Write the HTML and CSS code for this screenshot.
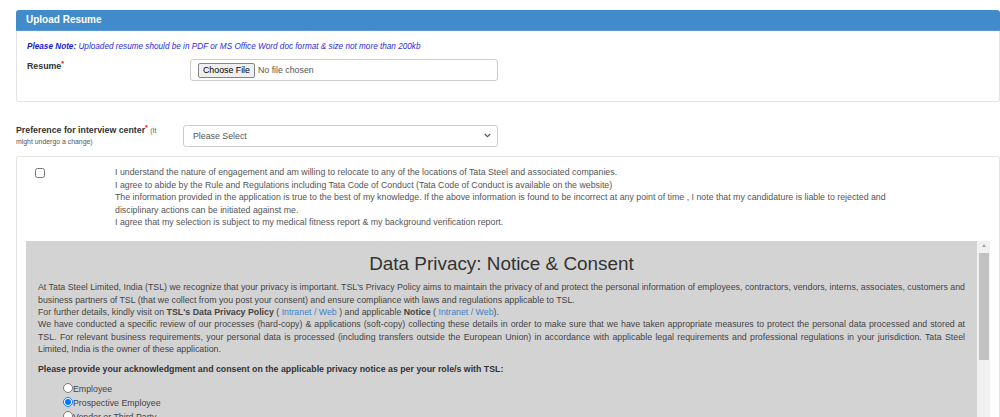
FILE: index.html
```html
<!DOCTYPE html>
<html lang="en">
<head>
<meta charset="utf-8">
<title>Upload Resume</title>
<link rel="stylesheet" href="styles.css">
</head>
<body>
<div class="page">
  <section class="panel panel-upload">
    <div class="panel-heading">Upload Resume</div>
    <div class="panel-body">
      <p class="note"><b>Please Note:</b> Uploaded resume should be in PDF or MS Office Word doc format &amp; size not more than 200kb</p>
      <div class="form-row">
        <label class="lbl lbl-resume">Resume<sup class="req">*</sup></label>
        <input type="file" class="file-input">
      </div>
    </div>
  </section>

  <div class="form-row pref-row">
    <label class="lbl lbl-pref">Preference for interview center<sup class="req">*</sup> <small>(It might undergo a change)</small></label>
    <div class="select-wrap">
      <select class="select"><option>Please Select</option></select>
      <svg class="select-arrow" width="7" height="5" viewBox="0 0 7 5" aria-hidden="true"><path d="M0.8 1 L3.5 3.7 L6.2 1" fill="none" stroke="#555" stroke-width="1.1"/></svg>
    </div>
  </div>

  <section class="panel panel-consent">
    <div class="consent-row">
      <div class="check-col"><input type="checkbox" class="check"></div>
      <div class="consent-text">I understand the nature of engagement and am willing to relocate to any of the locations of Tata Steel and associated companies.<br>I agree to abide by the Rule and Regulations including Tata Code of Conduct (Tata Code of Conduct is available on the website)<br>The information provided in the application is true to the best of my knowledge. If the above information is found to be incorrect at any point of time , I note that my candidature is liable to rejected and disciplinary actions can be initiated against me.<br>I agree that my selection is subject to my medical fitness report &amp; my background verification report.</div>
    </div>
    <div class="privacy-box">
      <div class="privacy-content">
        <h2 class="privacy-title">Data Privacy: Notice &amp; Consent</h2>
        <p class="privacy-text">At Tata Steel Limited, India (TSL) we recognize that your privacy is important. TSL's Privacy Policy aims to maintain the privacy of and protect the personal information of employees, contractors, vendors, interns, associates, customers and business partners of TSL (that we collect from you post your consent) and ensure compliance with laws and regulations applicable to TSL.<br>For further details, kindly visit on <b>TSL's Data Privacy Policy</b> ( <span class="link">Intranet / Web</span> ) and applicable <b>Notice</b> ( <span class="link">Intranet / Web</span>).<br>We have conducted a specific review of our processes (hard-copy) &amp; applications (soft-copy) collecting these details in order to make sure that we have taken appropriate measures to protect the personal data processed and stored at TSL. For relevant business requirements, your personal data is processed (including transfers outside the European Union) in accordance with applicable legal requirements and professional regulations in your jurisdiction. Tata Steel Limited, India is the owner of these application.</p>
        <p class="ask">Please provide your acknowledgment and consent on the applicable privacy notice as per your role/s with TSL:</p>
        <ul class="roles">
          <li><label><input type="radio" name="role" class="radio">Employee</label></li>
          <li><label><input type="radio" name="role" class="radio" checked>Prospective Employee</label></li>
          <li><label><input type="radio" name="role" class="radio">Vendor or Third Party</label></li>
        </ul>
      </div>
      <div class="scrollbar" aria-hidden="true">
        <div class="sb-up"></div>
        <div class="sb-thumb"></div>
      </div>
    </div>
  </section>
</div>
</body>
</html>
```
FILE: styles.css
```css
html, body {
  margin: 0;
  background: #fff;
}
body {
  font-family: "Liberation Sans", Arial, sans-serif;
  font-size: 8.8px;
  line-height: 12.4px;
  color: #333;
  overflow: hidden;
}
.page {
  padding: 10px 0 0 16px;
}
.panel {
  border: 1px solid #e3e3e3;
  border-radius: 3px;
  background: #fff;
}
.panel-upload {
  border-top: 0;
}
.panel-heading {
  margin: 0 -1px;
  padding: 5px 10px;
  background: #428bca;
  border-bottom: 1px solid #5a9ad3;
  border-radius: 3px 3px 0 0;
  color: #fff;
  font-size: 10px;
  font-weight: bold;
  line-height: 10px;
}
.panel-body {
  padding: 10px 10px 20px;
}
.note {
  margin: 0 0 5px;
  font-size: 8.2px;
  font-style: italic;
  color: #2b2be8;
}
.note b {
  color: #1a1ad0;
}
.form-row {
  display: flex;
  align-items: flex-start;
}
.lbl {
  font-weight: bold;
  color: #333;
}
.req {
  color: #e00;
  font-size: 7px;
  line-height: 0;
  vertical-align: 3px;
}
.lbl-resume {
  width: 163px;
  flex: none;
  padding-top: 1.5px;
}
.file-input {
  box-sizing: border-box;
  width: 308px;
  height: 22px;
  margin-top: 0.5px;
  padding: 3px 7px;
  border: 1px solid #ccc;
  border-radius: 3px;
  font-family: "Liberation Sans", Arial, sans-serif;
  font-size: 8.8px;
  color: #555;
  background: #fff;
}
.file-input::file-selector-button {
  margin: 0 3px 0 0;
  padding: 1px 4px;
  border: 1px solid #858585;
  border-radius: 2px;
  background: #efefef;
  font-family: "Liberation Sans", Arial, sans-serif;
  font-size: 8.8px;
  line-height: 11px;
  color: #000;
}
.pref-row {
  margin-top: 22px;
}
.lbl-pref {
  box-sizing: border-box;
  width: 167px;
  flex: none;
  padding: 1.5px 8px 0 0;
  line-height: 11px;
}
.lbl-pref small {
  font-size: 6.9px;
  font-weight: normal;
  color: #555;
}
.select-wrap {
  position: relative;
  margin-top: 1px;
}
.select {
  display: block;
  box-sizing: border-box;
  width: 315px;
  height: 22px;
  padding: 0 9px;
  border: 1px solid #ccc;
  border-radius: 3px;
  background: #fff;
  appearance: none;
  -webkit-appearance: none;
  font-family: "Liberation Sans", Arial, sans-serif;
  font-size: 8.8px;
  color: #555;
}
.select-arrow {
  position: absolute;
  right: 7px;
  top: 8.5px;
}
.panel-consent {
  margin-top: 9px;
  padding: 9px 9px 0 9px;
  border-bottom: 0;
  border-radius: 3px 3px 0 0;
}
.consent-row {
  display: flex;
  margin-bottom: 12.5px;
}
.check-col {
  width: 89px;
  flex: none;
}
.check {
  width: 10px;
  height: 10px;
  margin: 2px 0 0 9px;
  display: block;
}
.consent-text {
  width: 790px;
  color: #555;
}
.privacy-box {
  display: flex;
  height: 260px;
}
.privacy-content {
  flex: 1;
  min-width: 0;
  padding: 0 12px;
  background: #d3d3d3;
  color: #444;
}
.scrollbar {
  width: 13px;
  flex: none;
  display: flex;
  flex-direction: column;
  background: #f1f1f1;
}
.sb-up {
  height: 12px;
  display: flex;
  justify-content: center;
  align-items: center;
}
.sb-up::before {
  content: "";
  width: 0;
  height: 0;
  border-left: 2.5px solid transparent;
  border-right: 2.5px solid transparent;
  border-bottom: 3px solid #a3a3a3;
  margin-top: -2px;
}
.sb-thumb {
  height: 107px;
  margin: 0 1px 0 2px;
  background: #c1c1c1;
}
.privacy-title {
  margin: 13px 0 6.5px;
  font-size: 18.9px;
  font-weight: normal;
  line-height: 20.8px;
  text-align: center;
  color: #333;
}
.privacy-text {
  margin: 0 0 7px;
  text-align: justify;
}
.link {
  color: #3c82c8;
}
.ask {
  margin: 0 0 6.5px;
  font-weight: bold;
  color: #333;
}
.roles {
  list-style: none;
  margin: 0;
  padding: 0 0 0 25px;
  line-height: 14px;
}
.radio {
  width: 10px;
  height: 10px;
  margin: 0;
  vertical-align: -1px;
}
```
